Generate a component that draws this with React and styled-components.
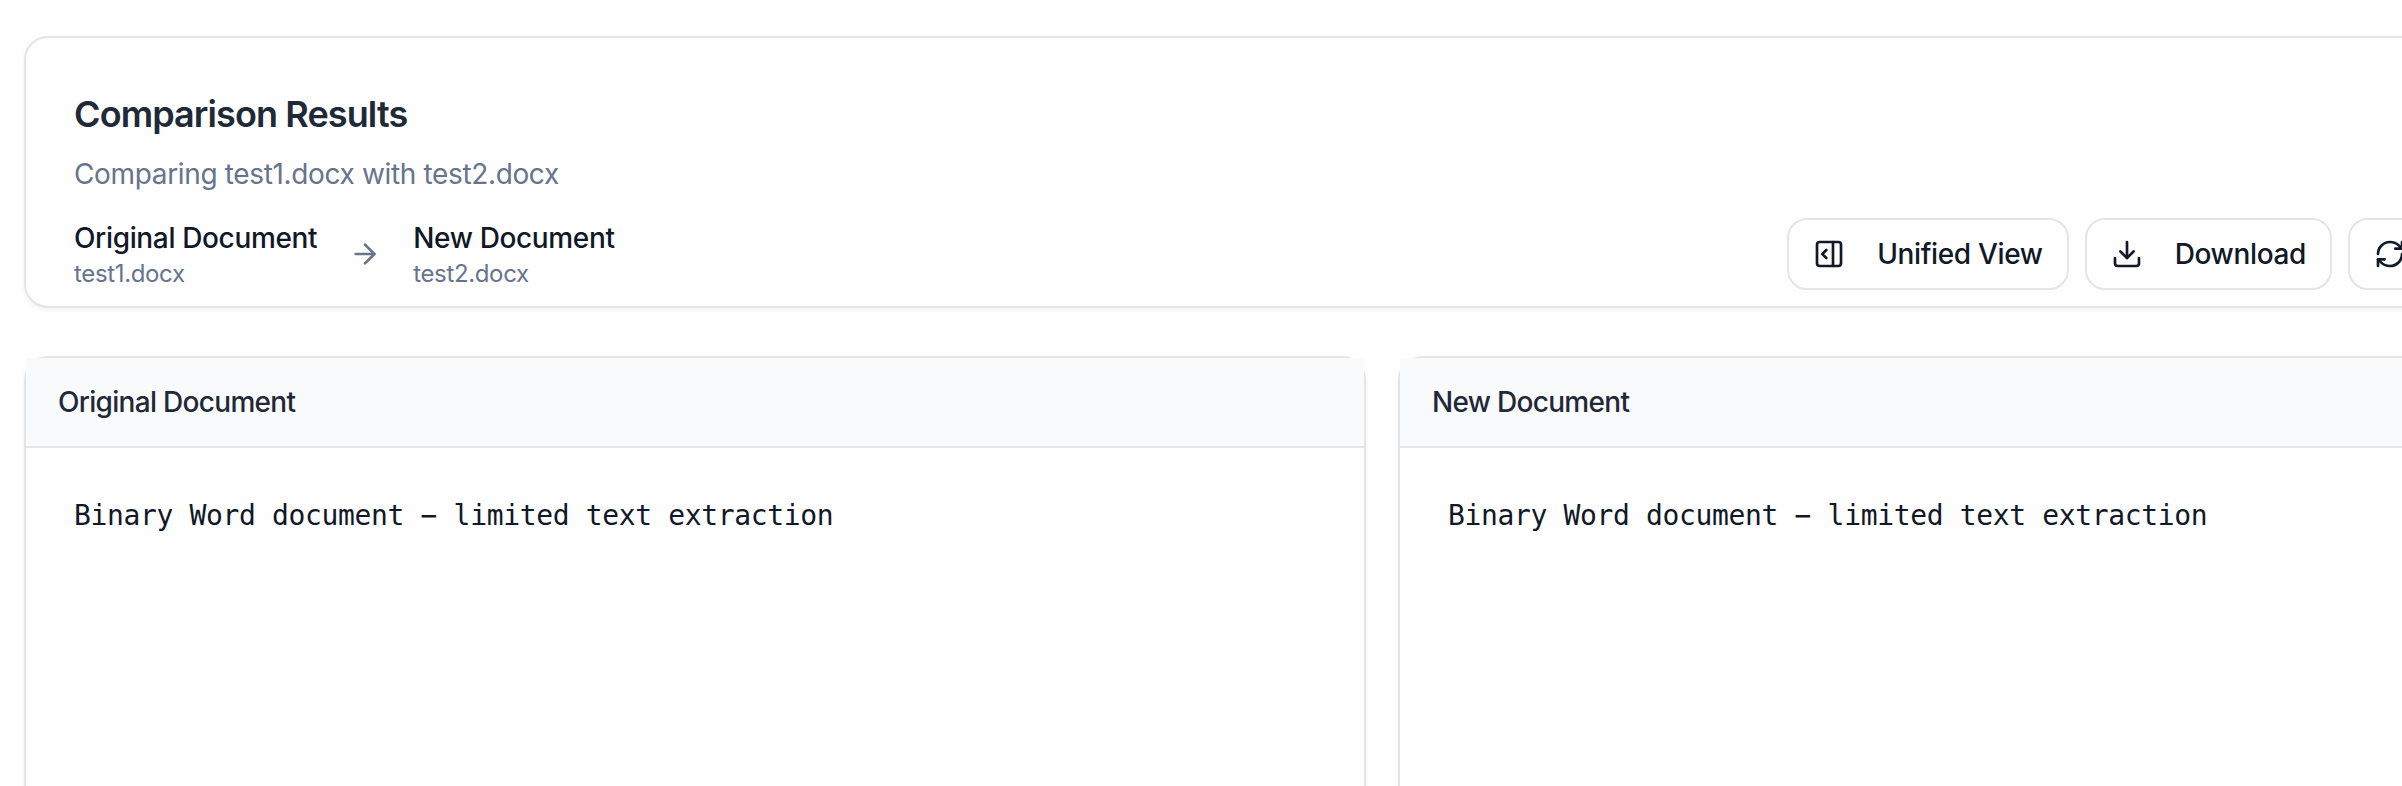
import React from "react";
import styled, { createGlobalStyle } from "styled-components";
import { ArrowRight, Download, PanelRightOpen, RefreshCw } from "lucide-react";

const GlobalStyle = createGlobalStyle`
  *, *::before, *::after { box-sizing: border-box; }
  html, body { margin: 0; overflow: hidden; background: #fefefe; }
  body {
    font-family: Inter, "Liberation Sans", sans-serif;
    font-size: 28px;
    line-height: 40px;
    letter-spacing: -0.352px;
    color: #111827;
    -webkit-font-smoothing: antialiased;
  }
  h2, h3, p, pre { margin: 0; }
`;

const Viewport = styled.div`
  width: 100%;
  height: 786px;
  overflow: hidden;
`;

const Page = styled.main`
  width: 2764px;
  height: 786px;
  padding: 36px 24px 0;
  display: flex;
  flex-direction: column;
  gap: 48px;
  overflow: hidden;
`;

const Card = styled.section`
  border: 2px solid #e5e5e5;
  border-radius: 24px;
  background: #fefefe;
  box-shadow: 0 2px 4px rgba(0, 0, 0, 0.05);
`;

const SummaryCard = styled(Card)`
  padding: 48px 48px 16px;
`;

const Title = styled.h2`
  font-size: 36px;
  line-height: 56px;
  font-weight: 600;
  letter-spacing: -0.025em;
  color: #1f2937;
`;

const Description = styled.p`
  margin-top: 12px;
  color: #67748c;
`;

const SummaryRow = styled.div`
  margin-top: 24px;
  display: flex;
  align-items: center;
  justify-content: space-between;
`;

const FilePair = styled.div`
  display: flex;
  align-items: center;
  gap: 32px;
  color: #67748c;
`;

const FileLabel = styled.p`
  font-weight: 500;
  color: #111827;
`;

const FileName = styled.p`
  font-size: 24px;
  line-height: 32px;
`;

const Actions = styled.div`
  display: flex;
  gap: 16px;
`;

const ActionButton = styled.button`
  height: 72px;
  width: ${({ $width }) => $width || "auto"};
  padding: 0 24px;
  display: inline-flex;
  align-items: center;
  gap: 32px;
  border: 2px solid #e5e5e5;
  border-radius: 20px;
  background: #fefefe;
  color: #111827;
  font: inherit;
  font-weight: 500;
  letter-spacing: inherit;
  white-space: nowrap;
`;

const Panels = styled.div`
  flex: 1;
  display: grid;
  grid-template-columns: 1fr 1fr;
  gap: 32px;
`;

const Panel = styled(Card)`
  height: 900px;
`;

const PanelHeader = styled.header`
  padding: 24px 32px;
  border-bottom: 2px solid #e5e5e5;
  background: #f9fafc;
`;

const PanelTitle = styled.h3`
  font-size: 28px;
  line-height: 40px;
  font-weight: 500;
  letter-spacing: -0.025em;
  color: #1f2937;
`;

const DocumentText = styled.pre`
  padding: 48px;
  font-family: "DejaVu Sans Mono", monospace;
  font-size: 28px;
  line-height: 40px;
  color: #111827;
`;

const documents = [
  { label: "Original Document", file: "test1.docx" },
  { label: "New Document", file: "test2.docx" },
];

function FileInfo({ label, file }) {
  return (
    <div>
      <FileLabel>{label}</FileLabel>
      <FileName>{file}</FileName>
    </div>
  );
}

export default function App() {
  return (
    <>
      <GlobalStyle />
      <Viewport>
        <Page>
          <SummaryCard>
            <Title>Comparison Results</Title>
            <Description>Comparing test1.docx with test2.docx</Description>
            <SummaryRow>
              <FilePair>
                <FileInfo {...documents[0]} />
                <ArrowRight size={32} />
                <FileInfo {...documents[1]} />
              </FilePair>
              <Actions>
                <ActionButton>
                  <PanelRightOpen size={32} />
                  Unified View
                </ActionButton>
                <ActionButton>
                  <Download size={32} />
                  Download
                </ActionButton>
                <ActionButton $width="342px">
                  <RefreshCw size={32} />
                </ActionButton>
              </Actions>
            </SummaryRow>
          </SummaryCard>
          <Panels>
            {documents.map(({ label }) => (
              <Panel key={label}>
                <PanelHeader>
                  <PanelTitle>{label}</PanelTitle>
                </PanelHeader>
                <DocumentText>Binary Word document − limited text extraction</DocumentText>
              </Panel>
            ))}
          </Panels>
        </Page>
      </Viewport>
    </>
  );
}
